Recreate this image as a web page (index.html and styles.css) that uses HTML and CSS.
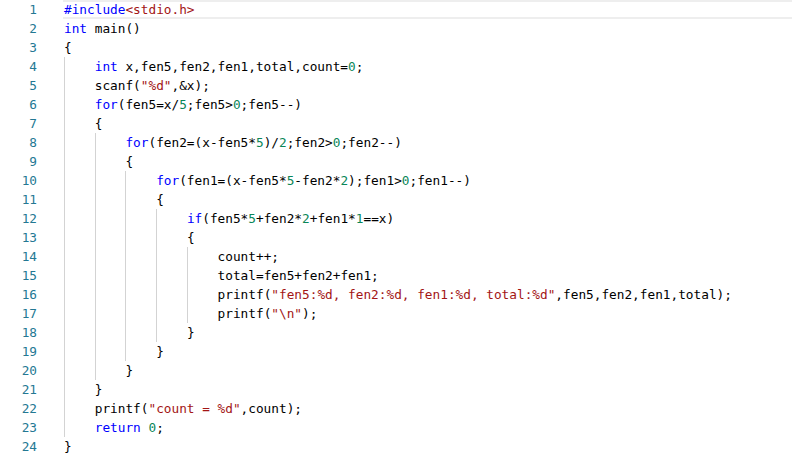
FILE: index.html
```html
<!DOCTYPE html>
<html>
<head>
<meta charset="utf-8">
<link rel="stylesheet" href="styles.css">
</head>
<body>
<div class="editor">
  <div class="gutter">
    <div>1</div><div>2</div><div>3</div><div>4</div><div>5</div><div>6</div><div>7</div><div>8</div><div>9</div><div>10</div><div>11</div><div>12</div><div>13</div><div>14</div><div>15</div><div>16</div><div>17</div><div>18</div><div>19</div><div>20</div><div>21</div><div>22</div><div>23</div><div>24</div>
  </div>
  <div class="code">
<div class="ln cur"><span class="k">#include</span><span class="s">&lt;stdio.h&gt;</span></div>
<div class="ln"><span class="k">int</span> main()</div>
<div class="ln">{</div>
<div class="ln"><span class="i">    </span><span class="k">int</span> x,fen5,fen2,fen1,total,count=<span class="n">0</span>;</div>
<div class="ln"><span class="i">    </span>scanf(<span class="s">"%d"</span>,&amp;x);</div>
<div class="ln"><span class="i">    </span><span class="k">for</span>(fen5=x/<span class="n">5</span>;fen5&gt;<span class="n">0</span>;fen5--)</div>
<div class="ln"><span class="i">    </span>{</div>
<div class="ln"><span class="i">    </span><span class="i">    </span><span class="k">for</span>(fen2=(x-fen5*<span class="n">5</span>)/<span class="n">2</span>;fen2&gt;<span class="n">0</span>;fen2--)</div>
<div class="ln"><span class="i">    </span><span class="i">    </span>{</div>
<div class="ln"><span class="i">    </span><span class="i">    </span><span class="i">    </span><span class="k">for</span>(fen1=(x-fen5*<span class="n">5</span>-fen2*<span class="n">2</span>);fen1&gt;<span class="n">0</span>;fen1--)</div>
<div class="ln"><span class="i">    </span><span class="i">    </span><span class="i">    </span>{</div>
<div class="ln"><span class="i">    </span><span class="i">    </span><span class="i">    </span><span class="i">    </span><span class="k">if</span>(fen5*<span class="n">5</span>+fen2*<span class="n">2</span>+fen1*<span class="n">1</span>==x)</div>
<div class="ln"><span class="i">    </span><span class="i">    </span><span class="i">    </span><span class="i">    </span>{</div>
<div class="ln"><span class="i">    </span><span class="i">    </span><span class="i">    </span><span class="i">    </span><span class="i">    </span>count++;</div>
<div class="ln"><span class="i">    </span><span class="i">    </span><span class="i">    </span><span class="i">    </span><span class="i">    </span>total=fen5+fen2+fen1;</div>
<div class="ln"><span class="i">    </span><span class="i">    </span><span class="i">    </span><span class="i">    </span><span class="i">    </span>printf(<span class="s">"fen5:%d, fen2:%d, fen1:%d, total:%d"</span>,fen5,fen2,fen1,total);</div>
<div class="ln"><span class="i">    </span><span class="i">    </span><span class="i">    </span><span class="i">    </span><span class="i">    </span>printf(<span class="s">"\n"</span>);</div>
<div class="ln"><span class="i">    </span><span class="i">    </span><span class="i">    </span><span class="i">    </span>}</div>
<div class="ln"><span class="i">    </span><span class="i">    </span><span class="i">    </span>}</div>
<div class="ln"><span class="i">    </span><span class="i">    </span>}</div>
<div class="ln"><span class="i">    </span>}</div>
<div class="ln"><span class="i">    </span>printf(<span class="s">"count = %d"</span>,count);</div>
<div class="ln"><span class="i">    </span><span class="k">return</span> <span class="n">0</span>;</div>
<div class="ln">}</div>
  </div>
</div>
</body>
</html>
```
FILE: styles.css
```css
html, body {
  margin: 0;
  padding: 0;
  background: #ffffff;
}
.editor {
  display: flex;
  font-family: "DejaVu Sans Mono", "Liberation Mono", monospace;
  font-size: 12.75px;
  line-height: 19px;
  color: #000000;
}
.gutter {
  width: 37px;
  padding-right: 27px;
  text-align: right;
  color: #237893;
}
.gutter div {
  height: 19px;
}
.code {
  flex: 1;
}
.ln {
  height: 19px;
  white-space: pre;
}
.cur {
  box-sizing: border-box;
  border-top: 2px solid #eeeeee;
  border-bottom: 2px solid #eeeeee;
  line-height: 15px;
  margin-left: -1px;
  padding-left: 1px;
}
.i {
  display: inline-block;
  height: 19px;
  vertical-align: top;
  box-shadow: inset 1px 0 0 #d3d3d3;
}
.k { color: #0000ff; }
.s { color: #a31515; }
.n { color: #098658; }
```
